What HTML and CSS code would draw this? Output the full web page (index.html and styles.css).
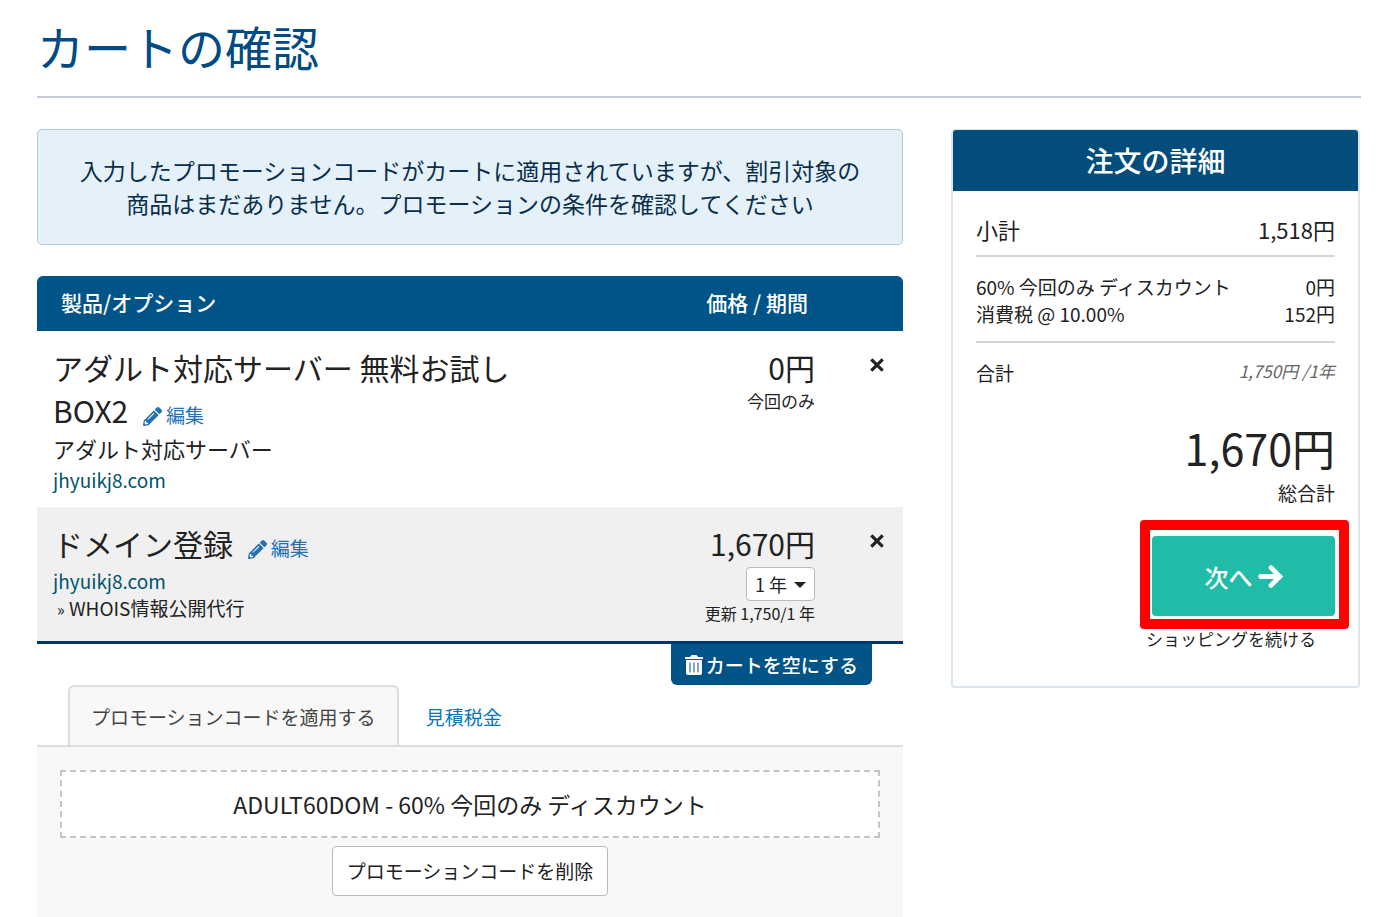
FILE: index.html
```html
<!DOCTYPE html>
<html lang="ja">
<head>
<meta charset="utf-8">
<meta name="viewport" content="width=device-width, initial-scale=1">
<title>カートの確認</title>
<link rel="stylesheet" href="styles.css">
</head>
<body>
<svg class="sprite" aria-hidden="true">
  <symbol id="pencil" viewBox="0 0 512 512"><path d="M498 142l-46.600 46.600c-4.700 4.700-12.300 4.700-17 0L323.500 77.700c-4.700-4.700-4.700-12.300 0-17L370.100 14c18.700-18.700 49.100-18.700 67.900 0l60.100 60.100c18.700 18.700 18.700 49.100-.1 67.900zm-214.200-42L21.500 362.300.3 483.900c-2.900 16.400 11.400 30.600 27.800 27.800l121.500-21.300 262.300-262.300c4.700-4.700 4.700-12.300 0-17L301 100.100c-4.800-4.700-12.400-4.700-17.200-.1zM124.100 339.900c-5.500-5.500-5.500-14.300 0-19.800l154-154c5.500-5.500 14.300-5.500 19.800 0s5.500 14.300 0 19.800l-154 154c-5.500 5.500-14.300 5.500-19.800 0zM88 424h48v36.300l-64.500 11.300-31.100-31.100L51.700 376H88v48z"/></symbol>
  <symbol id="times" viewBox="0 0 14 14"><path d="M2 2l10 10M12 2L2 12" fill="none" stroke="currentColor" stroke-width="2.800"/></symbol>
  <symbol id="trash" viewBox="0 0 18 20"><path fill-rule="evenodd" d="M0 2h5l1-1.500Q6.300 0 7 0h4q.7 0 1 .5L13 2h5v2H0zM1 5h16v13q0 2-2 2H3q-2 0-2-2zM4.500 7.500v10h1v-10zm4 0v10h1v-10zm4 0v10h1v-10z"/></symbol>
  <symbol id="arrow" viewBox="0 0 24 24"><path d="M2.500 12h18M12.500 3.500l8.500 8.500-8.500 8.500" fill="none" stroke="currentColor" stroke-width="4.600" stroke-linecap="round"/></symbol>
  <symbol id="caret" viewBox="0 0 12 6"><path d="M0 0h12L6 6z"/></symbol>
</svg>
<div class="page">
  <header class="page-header"><h1>カートの確認</h1></header>
  <div class="layout">
    <main>
      <div class="alert" role="alert">入力したプロモーションコードがカートに適用されていますが、割引対象の<br>商品はまだありません。プロモーションの条件を確認してください</div>
      <table class="cart">
        <thead>
          <tr><th class="col-product" scope="col">製品/オプション</th><th class="col-price" scope="col">価格 / 期間</th><th class="col-remove"></th></tr>
        </thead>
        <tbody>
          <tr>
            <td class="product">
              <div class="name">アダルト対応サーバー 無料お試し BOX2 <a class="edit" href="#"><svg><use href="#pencil"/></svg>編集</a></div>
              <div class="group">アダルト対応サーバー</div>
              <div class="domain">jhyuikj8.com</div>
            </td>
            <td class="price"><div class="amount">0円</div><div class="cycle">今回のみ</div></td>
            <td class="remove"><button type="button" aria-label="削除"><svg><use href="#times"/></svg></button></td>
          </tr>
          <tr class="alt">
            <td class="product">
              <div class="name">ドメイン登録 <a class="edit" href="#"><svg><use href="#pencil"/></svg>編集</a></div>
              <div class="domain">jhyuikj8.com</div>
              <div class="addon"><small>»</small> WHOIS情報公開代行</div>
            </td>
            <td class="price">
              <div class="amount">1,670円</div>
              <div class="term"><select aria-label="登録期間"><option>1 年</option></select><svg><use href="#caret"/></svg></div>
              <div class="renewal">更新 1,750/1 年</div>
            </td>
            <td class="remove"><button type="button" aria-label="削除"><svg><use href="#times"/></svg></button></td>
          </tr>
        </tbody>
      </table>
      <div class="cart-actions"><button class="empty" type="button"><svg><use href="#trash"/></svg>カートを空にする</button></div>
      <nav class="tabs"><a class="tab active" href="#promo">プロモーションコードを適用する</a><a class="tab" href="#tax">見積税金</a></nav>
      <section class="panel" id="promo">
        <div class="promo-code">ADULT60DOM - 60% 今回のみ ディスカウント</div>
        <button class="remove-promo" type="button">プロモーションコードを削除</button>
      </section>
    </main>
    <aside class="summary">
      <h2>注文の詳細</h2>
      <div class="summary-body">
        <div class="row subtotal"><span>小計</span><span>1,518円</span></div>
        <div class="charges">
          <div class="row"><span>60% 今回のみ ディスカウント</span><span>0円</span></div>
          <div class="row"><span>消費税 @ 10.00%</span><span>152円</span></div>
        </div>
        <div class="row recurring"><span>合計</span><em>1,750円 /1年</em></div>
        <div class="total"><div class="total-amount">1,670円</div><div class="total-label">総合計</div></div>
        <div class="checkout"><button type="button">次へ<svg><use href="#arrow"/></svg></button><span class="highlight"></span></div>
        <a class="continue" href="#">ショッピングを続ける</a>
      </div>
    </aside>
  </div>
</div>
</body>
</html>
```
FILE: styles.css
```css
* { box-sizing: border-box; }
body {
  margin: 0;
  background: #fff;
  color: #222;
  font-family: "Noto Sans CJK JP", sans-serif;
  font-size: 19px;
  line-height: 27px;
}
button, select { font: inherit; color: inherit; cursor: pointer; }
a { text-decoration: none; }
svg { fill: currentColor; }
.sprite { display: none; }
.page { padding: 0 39px 0 37px; }
.page-header { padding: 16px 0 20px; border-bottom: 2px solid #c3ced8; }
h1 { margin: 0; color: #004b85; font-size: 47px; line-height: 60px; font-weight: 400; }
.layout { display: grid; grid-template-columns: 866fr 409fr; gap: 48px; align-items: start; padding: 31px 1px 0 0; }
main { min-width: 0; }

.alert {
  padding: 24px;
  border: 1px solid #b3c8d6;
  border-radius: 5px;
  background: #e4f1f9;
  color: #0b2e4b;
  font-size: 23px;
  line-height: 33px;
  text-align: center;
}

.cart { width: 100%; margin-top: 31px; border-spacing: 0; table-layout: fixed; border-bottom: 3px solid #00386c; }
.cart th { height: 55px; padding: 0 24px 2px; background: #005487; color: #fff; font-size: 21px; font-weight: 500; text-align: left; }
.cart th:first-child { border-top-left-radius: 6px; }
.cart th:last-child { border-top-right-radius: 6px; }
.cart .col-product { width: 62%; }
.cart .col-price { padding-right: 43px; text-align: right; }
.cart .col-remove { width: 52px; }
.cart td { padding: 15px 16px 14px; vertical-align: top; }
.cart .alt td { background: #f0f0f0; padding-bottom: 16px; }
.name { font-size: 30px; line-height: 43px; }
.edit { margin-left: 8px; color: #2471b8; font-size: 19px; line-height: 20px; white-space: nowrap; }
.edit svg { width: 19px; height: 19px; margin-right: 4px; vertical-align: -3px; }
.group { font-size: 22px; line-height: 32px; }
.domain { margin-top: 2px; color: #00566d; }
.addon { padding-left: 4px; }
.addon small { font-size: 16px; line-height: 20px; }
.cart .price { padding-right: 36px; text-align: right; }
.amount { font-size: 30px; line-height: 43px; }
.cycle { font-size: 17px; line-height: 24px; }
.term { display: inline-block; position: relative; vertical-align: top; margin-top: 2px; }
.term select { display: block; width: 69px; height: 34px; padding: 0 8px; appearance: none; border: 1px solid #bbb; border-radius: 4px; background: #fff; font-size: 18px; }
.term svg { position: absolute; right: 9px; top: 15px; width: 12px; height: 6px; pointer-events: none; }
.renewal { font-size: 16px; line-height: 24px; }
.cart .remove { padding: 20px 0 0; text-align: center; }
.remove button { padding: 0; border: 0; background: none; line-height: 0; }
.remove svg { width: 16px; height: 16px; }

.cart-actions { display: flex; justify-content: flex-end; padding-right: 31px; }
.empty { display: flex; align-items: center; gap: 3px; height: 41px; padding: 0 14px; border: 0; border-radius: 0 0 6px 6px; background: #005487; color: #fff; font-weight: 500; }
.empty svg { width: 18px; height: 20px; }

.tabs { display: flex; padding-left: 31px; border-bottom: 2px solid #ddd; }
.tab { height: 60px; padding: 16px 25px; border: 2px solid transparent; border-bottom: 0; color: #0877bd; }
.tab.active { margin-bottom: -2px; padding: 16px 21px; border-color: #ddd; border-radius: 6px 6px 0 0; background: #f8f8f8; color: #444; }
.panel { padding: 23px; background: #f8f8f8; text-align: center; }
.promo-code { padding: 16px 24px; border: 2px dashed #c4c4c4; background: #fff; font-size: 23px; line-height: 32px; }
.remove-promo { height: 50px; margin-top: 8px; padding: 0 14px 1px; border: 1px solid #bbb; border-radius: 4px; background: #fff; }

.summary { border: 2px solid #dbe6ef; border-top-width: 1px; border-radius: 4px; }
.summary h2 { margin: 0; padding: 10px 0 11px; border-radius: 3px 3px 0 0; background: #034d7c; color: #fff; font-size: 28px; line-height: 40px; font-weight: 500; text-align: center; }
.summary-body { padding: 22px 23px 34px; }
.row { display: flex; justify-content: space-between; }
.subtotal { padding-bottom: 10px; border-bottom: 2px solid #d5d5d5; font-size: 22px; line-height: 32px; }
.charges { padding: 16px 0 14px; border-bottom: 2px solid #d5d5d5; }
.recurring { padding-top: 16px; }
.recurring em { color: #666; font-size: 17px; line-height: 24px; }
.total { margin-top: 29px; text-align: right; }
.total-amount { font-size: 43px; line-height: 64px; }
.checkout { position: relative; width: 183px; margin: 30px 0 0 auto; }
.checkout button { display: flex; align-items: center; justify-content: center; gap: 5px; width: 100%; height: 80px; padding: 0; border: 0; border-radius: 4px; background: #20bca8; color: #fff; font-size: 24px; font-weight: 500; }
.checkout svg { width: 25px; height: 25px; }
.highlight { position: absolute; inset: -16px -14px -13px -12px; border: 10px solid #f00; border-radius: 4px; pointer-events: none; }
.continue { display: block; margin-top: 9px; padding-right: 19px; color: #222; font-size: 17px; text-align: right; }
```
